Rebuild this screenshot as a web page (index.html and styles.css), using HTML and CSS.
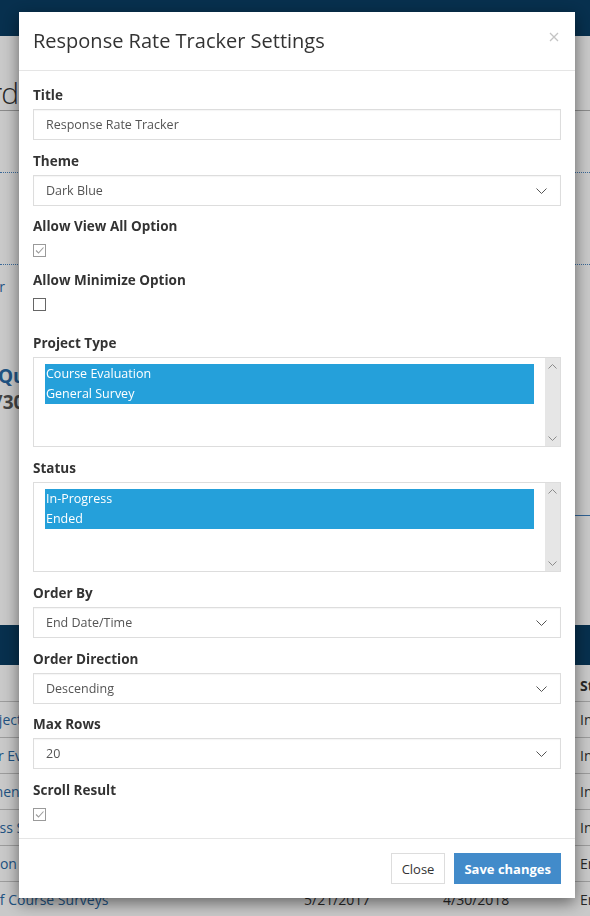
FILE: index.html
```html
<!doctype html>
<html lang="en">
<head>
    <meta charset="utf-8"/>
    <title>Response Rate Tracker Settings</title>
    <link rel="stylesheet" href="styles.css">
</head>
<body>

<!--page behind the dialog-->
<div class="page">
    <div class="topbar"></div>
    <div class="page-head">
        <div class="edge"><h1>Dashboard</h1></div>
    </div>
    <div class="filters"></div>
    <div class="filter-link edge"><a href="#">Clear Filter</a></div>
    <div class="summary">
        <div class="summary-text">
            <h2>Quarterly Responses</h2>
            <p>4/30/2018</p>
        </div>
        <div class="summary-chart"></div>
    </div>

    <div class="widget">
        <div class="widget-bar"></div>
        <div class="table">
            <div class="row head">
                <span>Project</span><span>Start</span><span>End</span><span>Status</span>
            </div>
            <div class="row">
                <a href="#">Final Project</a><span>5/21/2017</span><span>4/30/2018</span><span>In-Progress</span>
            </div>
            <div class="row">
                <a href="#">Semester Evaluation</a><span>5/21/2017</span><span>4/30/2018</span><span>In-Progress</span>
            </div>
            <div class="row">
                <a href="#">Employment</a><span>5/21/2017</span><span>4/30/2018</span><span>In-Progress</span>
            </div>
            <div class="row">
                <a href="#">Awareness Survey</a><span>5/21/2017</span><span>4/30/2018</span><span>In-Progress</span>
            </div>
            <div class="row">
                <a href="#">Orientation</a><span>5/21/2017</span><span>4/30/2018</span><span>Ended</span>
            </div>
            <div class="row">
                <a href="#">Review of Course Surveys</a><span>5/21/2017</span><span>4/30/2018</span><span>Ended</span>
            </div>
        </div>
    </div>
</div>

<div class="backdrop"></div>

<!--settings dialog-->
<div class="modal">
    <div class="modal-header">
        <h4>Response Rate Tracker Settings</h4>
        <button class="close" type="button">
            <svg width="10" height="10" viewBox="0 0 10 10"><path d="M1 1L9 9M9 1L1 9" stroke="#c4c4c4" stroke-width="1.3" fill="none"/></svg>
        </button>
    </div>

    <div class="modal-body">
        <div class="group">
            <label>Title</label>
            <input class="control" type="text" value="Response Rate Tracker">
        </div>
        <div class="group group-tight">
            <label>Theme</label>
            <div class="select">
                <select class="control"><option>Dark Blue</option></select>
                <svg class="chevron" width="11" height="6" viewBox="0 0 11 6"><path d="M0.5 0.5L5.5 5.5L10.5 0.5" stroke="#555" fill="none"/></svg>
            </div>
        </div>
        <div class="group group-check">
            <label>Allow View All Option</label>
            <div class="check-row">
                <span class="checkbox checked"><svg width="11" height="11" viewBox="0 0 11 11"><path d="M2 5.5L4.5 8L9.5 2.5" stroke="#9c9c9c" stroke-width="1.1" fill="none"/></svg></span>
            </div>
        </div>
        <div class="group group-wide">
            <label>Allow Minimize Option</label>
            <div class="check-row">
                <span class="checkbox"></span>
            </div>
        </div>
        <div class="group">
            <label>Project Type</label>
            <div class="listbox">
                <div class="options">
                    <div class="option">Course Evaluation</div>
                    <div class="option">General Survey</div>
                </div>
                <div class="scrollbar">
                    <svg width="9" height="5" viewBox="0 0 9 5"><path d="M0.5 4.5L4.5 0.5L8.5 4.5" stroke="#8c8c8c" fill="none"/></svg>
                    <svg width="9" height="5" viewBox="0 0 9 5"><path d="M0.5 0.5L4.5 4.5L8.5 0.5" stroke="#8c8c8c" fill="none"/></svg>
                </div>
            </div>
        </div>
        <div class="group">
            <label>Status</label>
            <div class="listbox">
                <div class="options">
                    <div class="option">In-Progress</div>
                    <div class="option">Ended</div>
                </div>
                <div class="scrollbar">
                    <svg width="9" height="5" viewBox="0 0 9 5"><path d="M0.5 4.5L4.5 0.5L8.5 4.5" stroke="#8c8c8c" fill="none"/></svg>
                    <svg width="9" height="5" viewBox="0 0 9 5"><path d="M0.5 0.5L4.5 4.5L8.5 0.5" stroke="#8c8c8c" fill="none"/></svg>
                </div>
            </div>
        </div>
        <div class="group">
            <label>Order By</label>
            <div class="select">
                <select class="control"><option>End Date/Time</option></select>
                <svg class="chevron" width="11" height="6" viewBox="0 0 11 6"><path d="M0.5 0.5L5.5 5.5L10.5 0.5" stroke="#555" fill="none"/></svg>
            </div>
        </div>
        <div class="group group-tight">
            <label>Order Direction</label>
            <div class="select">
                <select class="control"><option>Descending</option></select>
                <svg class="chevron" width="11" height="6" viewBox="0 0 11 6"><path d="M0.5 0.5L5.5 5.5L10.5 0.5" stroke="#555" fill="none"/></svg>
            </div>
        </div>
        <div class="group">
            <label>Max Rows</label>
            <div class="select">
                <select class="control"><option>20</option></select>
                <svg class="chevron" width="11" height="6" viewBox="0 0 11 6"><path d="M0.5 0.5L5.5 5.5L10.5 0.5" stroke="#555" fill="none"/></svg>
            </div>
        </div>
        <div class="group group-last">
            <label>Scroll Result</label>
            <div class="check-row">
                <span class="checkbox checked"><svg width="11" height="11" viewBox="0 0 11 11"><path d="M2 5.5L4.5 8L9.5 2.5" stroke="#9c9c9c" stroke-width="1.1" fill="none"/></svg></span>
            </div>
        </div>
    </div>

    <div class="modal-footer">
        <button class="btn" type="button">Close</button>
        <button class="btn btn-primary" type="button">Save changes</button>
    </div>
</div>

</body>
</html>
```

FILE: styles.css
```css
* {
    box-sizing: border-box;
}
body {
    margin: 0;
    height: 916px;
    overflow: hidden;
    font-family: "Open Sans", "Noto Sans", sans-serif;
    font-size: 14px;
    color: #333;
    background: #fff;
}
a {
    color: #2a6aa6;
    text-decoration: none;
}

/* page behind */
.topbar {
    height: 36px;
    background: #093d63;
}
.edge {
    width: 18px;
    display: flex;
    justify-content: flex-end;
    white-space: nowrap;
}
.page-head {
    height: 75px;
    padding-top: 40px;
    border-bottom: 1px solid #b0b0b0;
}
.page-head h1 {
    margin: 0;
    font-size: 30px;
    font-weight: 300;
    line-height: 33px;
    letter-spacing: -1px;
}
.filters {
    margin-top: 61px;
    height: 93px;
    border-top: 1px dotted #4a86c2;
    border-bottom: 1px dotted #4a86c2;
}
.filter-link {
    margin-top: 12px;
    width: 5px;
    line-height: 20px;
}
.summary {
    margin-top: 67px;
    display: flex;
}
.summary-text {
    width: 300px;
    margin-left: -2px;
    white-space: nowrap;
}
.summary-text h2 {
    margin: 0;
    font-size: 19px;
    line-height: 24px;
    color: #2a6aa6;
}
.summary-text p {
    margin: 2px 0 0 -14px;
    font-size: 19px;
    font-weight: bold;
    line-height: 24px;
    color: #555;
}
.summary-chart {
    flex: 1;
    height: 152px;
    border-bottom: 1px solid #3d7dbd;
}
.widget {
    margin-top: 109px;
}
.widget-bar {
    height: 40px;
    background: #093d63;
}
.table {
    margin-left: -58px;
    white-space: nowrap;
}
.row {
    display: grid;
    grid-template-columns: 362px 139px 137px 1fr;
    height: 36px;
    align-items: center;
    border-bottom: 1px solid #c6c6c6;
}
.row.head {
    height: 37px;
    font-weight: bold;
    padding-top: 4px;
}
.row span, .row a {
    overflow: hidden;
}

.backdrop {
    position: fixed;
    inset: 0;
    background: rgba(0, 0, 0, 0.21);
}

/* dialog */
.modal {
    position: fixed;
    top: 12px;
    left: 19px;
    width: 556px;
    background: #fff;
    box-shadow: 0 5px 15px rgba(0, 0, 0, 0.5);
}
.modal-header {
    display: flex;
    justify-content: space-between;
    align-items: flex-start;
    padding: 15px 15px 15px 14px;
    border-bottom: 1px solid #e5e5e5;
}
.modal-header h4 {
    margin: 0;
    font-size: 20px;
    font-weight: normal;
    line-height: 28px;
    color: #333;
}
.close {
    margin: 5px 1px 0 0;
    padding: 0;
    border: 0;
    background: none;
    line-height: 0;
}
.modal-body {
    padding: 14px;
}
.group {
    margin-bottom: 11px;
}
.group-check {
    margin-bottom: 10px;
}
.group-wide {
    margin-bottom: 19px;
}
.group-tight {
    margin-bottom: 10px;
}
.group-last {
    margin-bottom: 0;
}
.group label {
    display: block;
    margin-bottom: 4px;
    font-size: 13.5px;
    font-weight: bold;
    line-height: 20px;
    color: #333;
}
.control {
    display: block;
    width: 100%;
    height: 31px;
    padding: 0 12px;
    border: 1px solid #ddd;
    border-radius: 0;
    background: #fff;
    font-family: inherit;
    font-size: 12.5px;
    color: #555;
    box-shadow: inset 0 1px 1px rgba(0, 0, 0, 0.04);
    outline: none;
}
select.control {
    appearance: none;
    -webkit-appearance: none;
}
.select {
    position: relative;
}
.chevron {
    position: absolute;
    right: 14px;
    top: 13px;
    pointer-events: none;
}
.check-row {
    height: 20px;
    display: flex;
    align-items: center;
}
.checkbox {
    width: 13px;
    height: 13px;
    border: 1px solid #666;
    display: flex;
    align-items: center;
    justify-content: center;
}
.checkbox.checked {
    border-color: #9a9a9a;
}
.listbox {
    height: 90px;
    border: 1px solid #ddd;
    display: flex;
}
.options {
    flex: 1;
    padding: 6px 11px 0 11px;
}
.option {
    height: 20px;
    padding-left: 1px;
    line-height: 20px;
    font-size: 12.5px;
    color: #fff;
    background: #25a0da;
}
.scrollbar {
    width: 15px;
    padding: 6px 0 5px;
    background: #e6e6e6;
    display: flex;
    flex-direction: column;
    justify-content: space-between;
    align-items: center;
}
.modal-footer {
    display: flex;
    justify-content: flex-end;
    gap: 9px;
    padding: 14px;
    border-top: 1px solid #e5e5e5;
}
.btn {
    height: 31px;
    padding: 0 10px;
    border: 1px solid #ddd;
    border-radius: 0;
    background: #fff;
    font-family: inherit;
    font-size: 13px;
    color: #333;
}
.btn-primary {
    padding: 0 9px;
    border-color: #428bca;
    background: #428bca;
    color: #fff;
    font-weight: bold;
}
```
